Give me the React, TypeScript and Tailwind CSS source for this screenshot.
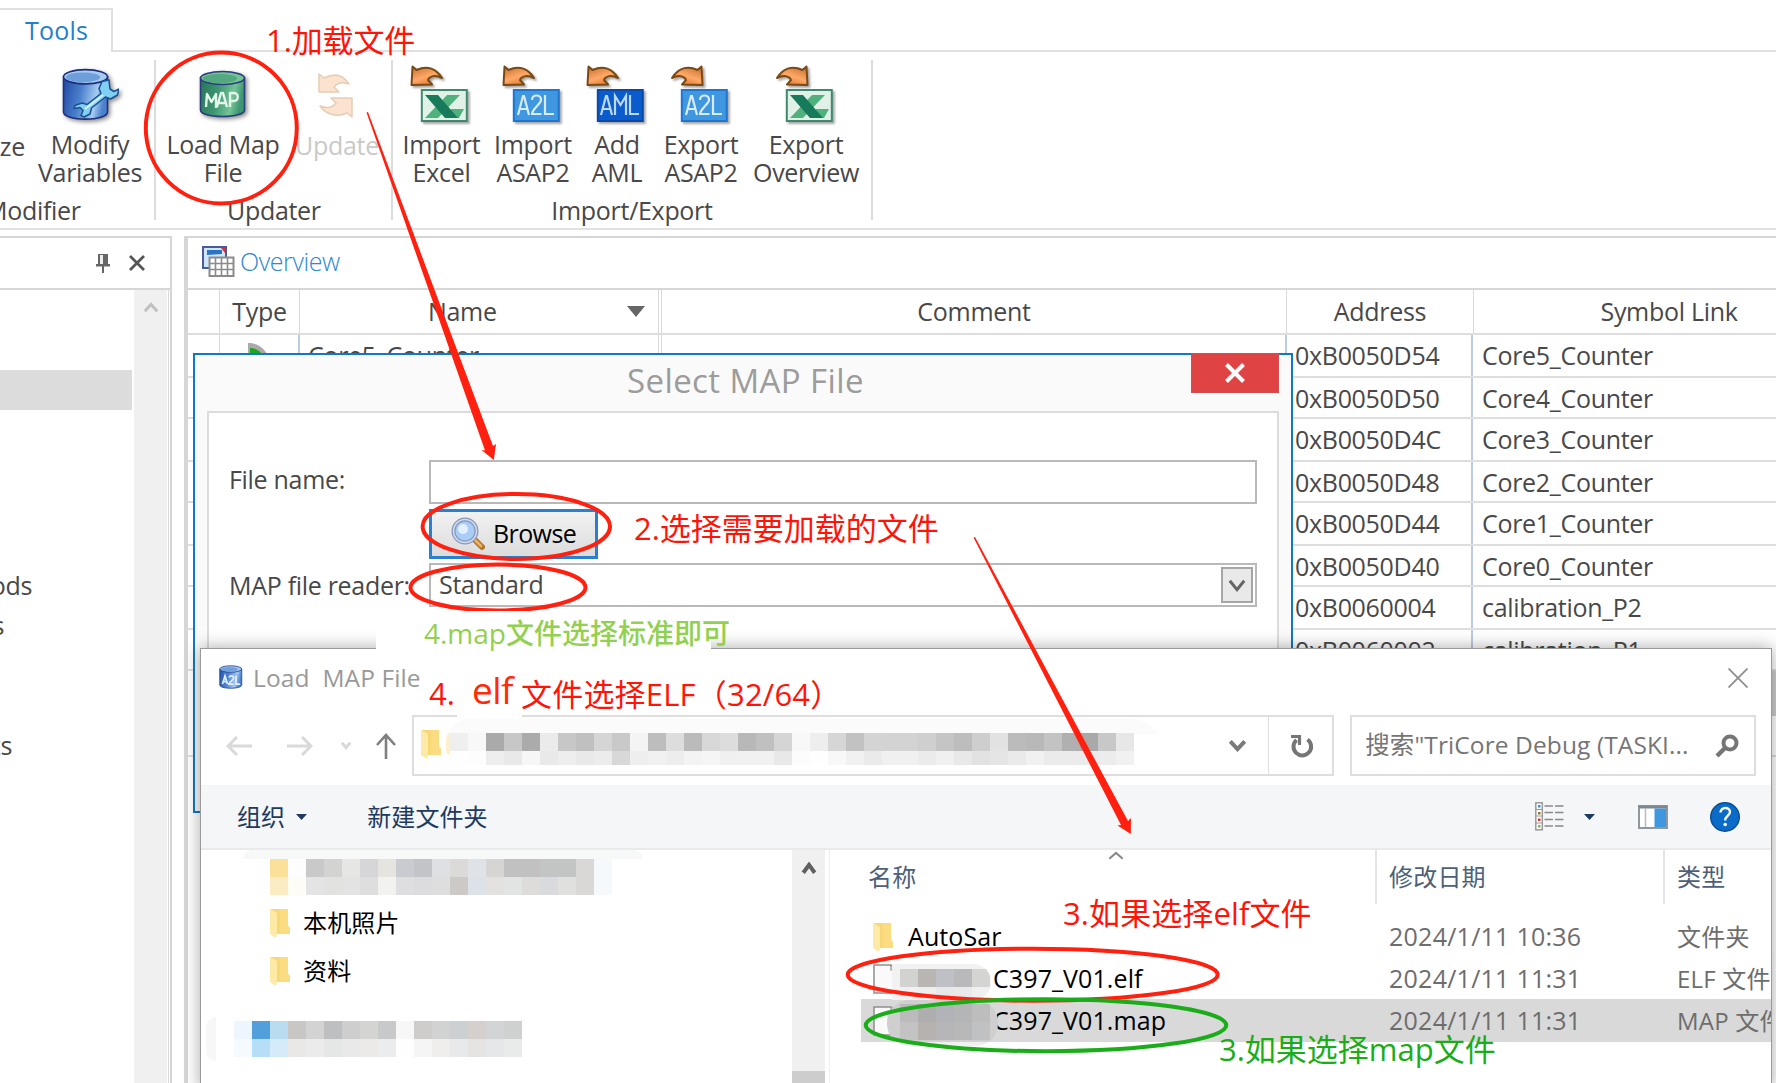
import React from "react";

const SANS = "font-['Open_Sans','Noto_Sans_CJK_SC',sans-serif]";

/* ---------- icons ---------- */

function Cylinder({ uid, dark, mid, light, stroke }: { uid: string; dark: string; mid: string; light: string; stroke: string }) {
  return (
    <g>
      <defs>
        <linearGradient id={uid} x1="0" x2="1" y1="0" y2="0.2">
          <stop offset="0" stopColor={dark} />
          <stop offset="0.45" stopColor={mid} />
          <stop offset="0.8" stopColor={light} />
          <stop offset="1" stopColor={mid} />
        </linearGradient>
      </defs>
      <path d="M1.5 8v32c0 4 10 6.500 22 6.500s22-2.500 22-6.500V8z" fill={`url(#${uid})`} stroke={stroke} strokeWidth="1.600" />
      <ellipse cx="23.500" cy="8" rx="22" ry="6.500" fill={light} stroke={stroke} strokeWidth="1.600" />
      <ellipse cx="21" cy="8.500" rx="17" ry="4.500" fill={mid} opacity="0.6" />
    </g>
  );
}

function ModifyIcon() {
  return (
    <svg width="58" height="56" viewBox="0 0 58 56" className="drop-shadow-[2px_2px_2px_rgba(0,0,0,0.45)]">
      <g transform="translate(1 1) scale(1 1.100)">
        <Cylinder uid="cylModify" dark="#2048a4" mid="#4a80cc" light="#a6ccf0" stroke="#1f2f80" />
      </g>
      <path
        d="M48 13l-7 1.500-3 7 2 5-14 11-5-1.500-7 2.500-1 3 6-1 3 3-2 5 3 1.500 6-3 1.500-6 14-11 5 2 7-4 1.500-6-5 2.500-4-2.500-.5-4z"
        fill="#7fd0f2"
        stroke="#1d4f94"
        strokeWidth="1.500"
        strokeLinejoin="round"
      />
      <path d="M24 42l18-14" stroke="#d8f3fd" strokeWidth="1.800" />
    </svg>
  );
}

function MapIcon() {
  return (
    <svg width="50" height="50" viewBox="0 0 50 50" className="ml-[2px] drop-shadow-[2px_2px_2px_rgba(0,0,0,0.45)]">
      <Cylinder uid="cylMap" dark="#277458" mid="#3d9672" light="#74c496" stroke="#2b3c80" />
      <path
        d="M7 37l1-13 4.500 8 4.500-8v14M18 37l4-14h2l4 14M19.500 33h7M31 37V23h4c5 0 5 8 0 8h-4"
        fill="none"
        stroke="#e4f6ec"
        strokeWidth="2.400"
        strokeLinejoin="round"
      />
    </svg>
  );
}

function UpdateIcon() {
  return (
    <svg width="38" height="48" viewBox="0 0 38 48" fill="#fbe3cf" stroke="#e6cdb4" strokeWidth="1.500" strokeLinejoin="round" className="-ml-[2px]">
      <path d="M2 2l5 4c10-5 19-3 25 6-8-3-12-1-15 3l5 5H2z" />
      <path d="M35 45l-5-4c-9 4-20 3-27-7 8 3 13 1 16-3l-5-5 21 0z" />
    </svg>
  );
}

function TransferIcon({ kind, out = false }: { kind: "XLS" | "A2L" | "AML"; out?: boolean }) {
  const gid = `arrow${kind}${out ? "Out" : "In"}`;
  return (
    <svg width="60" height="60" viewBox="0 0 60 60" className="-ml-[5px] drop-shadow-[2px_2px_1px_rgba(0,0,0,0.35)]">
      <defs>
        <linearGradient id={gid} x1="0" y1="0" x2="0.600" y2="1">
          <stop offset="0" stopColor="#c06a2a" />
          <stop offset="0.600" stopColor="#ffa868" />
          <stop offset="1" stopColor="#e07a2c" />
        </linearGradient>
      </defs>
      <g transform={out ? "translate(35 0) scale(-1 1)" : "translate(1 0)"}>
        <path
          d="M2.500 1.500l4 3.500c11-5 20-1 25.500 8-8-4-13-1-14 2l4 4.500-20.500.5z"
          fill={`url(#${gid})`}
          stroke="#7a4a14"
          strokeWidth="2"
          strokeLinejoin="round"
        />
      </g>
      {kind === "XLS" ? (
        <g>
          <rect x="12.800" y="25" width="45" height="31" fill="#e2f1e8" stroke="#3f8a6e" strokeWidth="2" />
          <path d="M38 30h13L29 53H16z" fill="#4fb27c" />
          <path d="M42 44h13l-5 9h-10z" fill="#4fb27c" />
          <path d="M16 30h13l20 23H36z" fill="#177a5a" />
        </g>
      ) : (
        <g>
          <rect
            x="12.800"
            y="25"
            width="45"
            height="31"
            fill={kind === "A2L" ? "#3f97e0" : "#0a5bcb"}
            stroke={kind === "A2L" ? "#1f76d0" : "#0b49a8"}
            strokeWidth="2"
          />
          {kind === "A2L" ? (
            <path d="M17 50l5-19h1l5 19M18.500 44h8M31 35c0-6 9-6 9 0 0 4-9 9-9 14h9.500M44 30v19h9" fill="none" stroke="#d9ecff" strokeWidth="2.200" />
          ) : (
            <path d="M16 50l5-19h1l5 19M17.500 44h8M30 50V31l5.500 9 5.500-9v19M45 30v19h9" fill="none" stroke="#bcd8fb" strokeWidth="2.200" />
          )}
        </g>
      )}
    </svg>
  );
}

function Folder() {
  return (
    <svg width="20" height="29" viewBox="0 0 20 29" className="shrink-0">
      <path d="M1 0h17v17l2 2v6H6z" fill="#f8d776" />
      <path d="M10 0h8v17l2 2v6H10z" fill="#fbdc80" />
      <path d="M0 0l7 4v21l-1 4-6-4z" fill="#ffe9a6" />
    </svg>
  );
}

function Doc() {
  return (
    <svg width="24" height="30" viewBox="0 0 24 30" className="shrink-0">
      <path d="M1 1h17l5 5v23H1z" fill="#fafafa" stroke="#8f8f8f" strokeWidth="1.500" />
      <path d="M18 1v5h5" fill="none" stroke="#8f8f8f" strokeWidth="1.200" />
    </svg>
  );
}

function Chevron({ className, w, h, sw, up = false }: { className: string; w: number; h: number; sw: number; up?: boolean }) {
  const o = sw / 2 + 0.3;
  const d = up ? `M${o} ${h - o}L${w / 2} ${o + 0.6}L${w - o} ${h - o}` : `M${o} ${o}L${w / 2} ${h - o - 0.6}L${w - o} ${o}`;
  return (
    <svg width={w} height={h} viewBox={`0 0 ${w} ${h}`} className={className}>
      <path d={d} fill="none" stroke="currentColor" strokeWidth={sw} />
    </svg>
  );
}

function Triangle({ className, w, h }: { className: string; w: number; h: number }) {
  return (
    <svg width={w} height={h} viewBox={`0 0 ${w} ${h}`} className={className}>
      <path d={`M0 0H${w}L${w / 2} ${h}z`} fill="currentColor" />
    </svg>
  );
}

/* Pixelated redaction: rows of 18px colour cells */
function Mosaic({ rows, rowClass = "h-[18px]" }: { rows: string[]; rowClass?: string }) {
  return (
    <div>
      {rows.map((row, i) => (
        <div key={i} className={`flex ${rowClass}`}>
          {row.split(" ").map((c, j) => (
            <div key={j} className="h-full w-[18px] shrink-0" style={{ backgroundColor: `#${c.length === 2 ? c + c + c : c}` }} />
          ))}
        </div>
      ))}
    </div>
  );
}

/* ---------- ribbon ---------- */

function RibbonItem({ width, icon, lines, muted = false }: { width: string; icon: React.ReactNode; lines: string[]; muted?: boolean }) {
  return (
    <div className={`flex shrink-0 flex-col items-center ${width}`}>
      <div className="flex h-[70px] items-center justify-center">{icon}</div>
      {lines.map((l) => (
        <div key={l} className={`h-7 whitespace-nowrap leading-7 ${muted ? "text-[#c9c9c9]" : ""}`}>
          {l}
        </div>
      ))}
    </div>
  );
}

function RibbonGroup({ width, label, labelClass, children }: { width: string; label: string; labelClass: string; children: React.ReactNode }) {
  return (
    <div className={`flex h-[160px] shrink-0 flex-col border-r-2 border-[#dcdcdc] ${width}`}>
      <div className="flex h-[136px]">{children}</div>
      <div className={`h-6 whitespace-nowrap leading-7 ${labelClass}`}>{label}</div>
    </div>
  );
}

function Ribbon() {
  return (
    <div className="h-[230px] shrink-0 border-b-2 border-[#e2e2e2]">
      <div className="flex h-[52px] items-end">
        <div className="h-11 w-[113px] shrink-0 border-r-2 border-t-2 border-[#e0e0e0] pl-[25px] text-[25px] leading-[40px] tracking-[0.2px] text-[#2380cc]">
          Tools
        </div>
        <div className="h-0 flex-1 border-b-2 border-[#e0e0e0]" />
      </div>
      <div className="flex pt-2">
        <RibbonGroup width="w-[156px]" label="Modifier" labelClass="-ml-[15px]">
          <div className="flex w-[25px] flex-col items-end pt-[72px]">
            <div className="leading-7">ze</div>
          </div>
          <RibbonItem width="w-[130px]" icon={<ModifyIcon />} lines={["Modify", "Variables"]} />
        </RibbonGroup>
        <RibbonGroup width="w-[237px]" label="Updater" labelClass="pl-[71px]">
          <RibbonItem width="w-[134px]" icon={<MapIcon />} lines={["Load Map", "File"]} />
          <RibbonItem width="w-[94px] pt-px" icon={<UpdateIcon />} lines={["Update"]} muted />
        </RibbonGroup>
        <RibbonGroup width="w-[480px]" label="Import/Export" labelClass="text-center">
          <div className="flex pl-[3px]">
            <RibbonItem width="w-[91px]" icon={<TransferIcon kind="XLS" />} lines={["Import", "Excel"]} />
            <RibbonItem width="w-[92px]" icon={<TransferIcon kind="A2L" />} lines={["Import", "ASAP2"]} />
            <RibbonItem width="w-[76px]" icon={<TransferIcon kind="AML" />} lines={["Add", "AML"]} />
            <RibbonItem width="w-[92px]" icon={<TransferIcon kind="A2L" out />} lines={["Export", "ASAP2"]} />
            <RibbonItem width="w-[118px]" icon={<TransferIcon kind="XLS" out />} lines={["Export", "Overview"]} />
          </div>
        </RibbonGroup>
      </div>
    </div>
  );
}

/* ---------- main panels ---------- */

function SidePanel() {
  return (
    <div className="flex w-[172px] shrink-0 flex-col border-r-2 border-t-2 border-[#d6d6d6]">
      <div className="flex h-[52px] items-center justify-end gap-[19px] border-b-2 border-[#d6d6d6] pr-[25px]">
        <svg width="14" height="20" viewBox="0 0 14 20">
          <path d="M2 1h10v11H2z" fill="#666" />
          <path d="M4 2h3v9H4z" fill="#eee" />
          <path d="M0 11h14v2.500H0zM6 13h2v7H6z" fill="#666" />
        </svg>
        <svg width="16" height="16" viewBox="0 0 16 16">
          <path d="M1 1l14 14M15 1L1 15" stroke="#555" strokeWidth="2.800" />
        </svg>
      </div>
      <div className="flex flex-1">
        <div className="w-[134px] overflow-hidden pt-[80px]">
          <div className="h-10 w-[132px] bg-[#dcdcdc]" />
          <div className="flex w-8 justify-end pt-[161px] leading-7">ods</div>
          <div className="flex w-1 justify-end pt-[12px] leading-7">s</div>
          <div className="flex w-3 justify-end pt-[92px] leading-7">ts</div>
        </div>
        <div className="flex w-[33px] justify-center bg-[#f0f0f0] pt-[12px]">
          <Chevron className="text-[#c0c0c0]" w={16} h={11} sw={3} up />
        </div>
        <div className="w-[2px] border-r border-[#d9d9d9]" />
      </div>
    </div>
  );
}

const ROWS: [string, string, string][] = [
  ["h-[43px]", "0xB0050D54", "Core5_Counter"],
  ["h-[41px]", "0xB0050D50", "Core4_Counter"],
  ["h-[43px]", "0xB0050D4C", "Core3_Counter"],
  ["h-[41px]", "0xB0050D48", "Core2_Counter"],
  ["h-[43px]", "0xB0050D44", "Core1_Counter"],
  ["h-[41px]", "0xB0050D40", "Core0_Counter"],
  ["h-[43px]", "0xB0060004", "calibration_P2"],
  ["h-[41px]", "0xB0060002", "calibration_P1"],
];

function OverviewPanel() {
  return (
    <div className="flex flex-1 flex-col overflow-hidden border-l-4 border-t-2 border-[#d6d6d6]">
      <div className="flex h-[52px] shrink-0 items-center border-b-2 border-[#d6d6d6] pl-[14px]">
        <svg width="33" height="32" viewBox="0 0 33 32" className="-mt-[3px]">
          <rect x="1" y="1" width="23" height="21" fill="#cfe6fa" stroke="#4b5a9c" strokeWidth="2" />
          <path d="M5 4h15v4l-15 1z" fill="#2a74c4" />
          <path d="M19 2h4v5z" fill="#d33" />
          <rect x="7.500" y="11.500" width="24" height="18.500" fill="#fff" stroke="#8b8b8b" strokeWidth="2" />
          <path d="M13.500 11v19M19.500 11v19M25.500 11v19M7 17.500h25M7 23.500h25" stroke="#8b8b8b" strokeWidth="1.600" />
        </svg>
        <span className="-mt-[2px] ml-[5px] font-light tracking-[-0.4px] text-[#2f88d2]">Overview</span>
      </div>
      <div className="flex h-[45px] shrink-0 border-b-2 border-[#dedede] text-center leading-[43px]">
        <div className="w-8 shrink-0 border-r border-[#d9d9d9]" />
        <div className="w-[80px] shrink-0 border-r border-[#d9d9d9]">Type</div>
        <div className="flex w-[362px] shrink-0 items-center border-r-4 border-double border-[#d9d9d9]">
          <span className="ml-[128px]">Name</span>
          <Triangle className="ml-auto mr-[13px] text-[#666]" w={18} h={11} />
        </div>
        <div className="w-[625px] shrink-0 border-r border-[#d9d9d9]">Comment</div>
        <div className="w-[187px] shrink-0 border-r border-[#d9d9d9]">Address</div>
        <div className="w-[390px] shrink-0">Symbol Link</div>
      </div>
      {ROWS.map(([h, addr, name], i) => (
        <div key={addr} className={`flex shrink-0 border-b-2 border-[#dedede] ${h} leading-[40px]`}>
          <div className="w-8 border-r border-[#d9d9d9]" />
          <div className="flex w-[80px] justify-center border-r-2 border-[#bccbe0] pt-[7px]">
            {i === 0 && (
              <svg width="24" height="24" viewBox="0 0 24 24">
                <path d="M1 1c12 0 21 8 22 22H1z" fill="#aaa" />
                <path d="M3 6c7 0 13 5 15 12H3z" fill="#1ea51e" />
              </svg>
            )}
          </div>
          <div className="w-[362px] border-r-4 border-double border-[#d9d9d9] pl-[8px]">{name}</div>
          <div className="w-[625px] border-r-2 border-[#bccbe0]" />
          <div className="w-[186px] border-r-2 border-[#bccbe0] pl-[8px]">{addr}</div>
          <div className="pl-[9px]">{name}</div>
        </div>
      ))}
      <div className="flex h-[45px] shrink-0 justify-end">
        <div className="w-[12px] bg-[#cdcdcd]" />
      </div>
      <div className="flex h-[41px] shrink-0 border-b-2 border-[#dedede]" />
    </div>
  );
}

/* ---------- Select MAP File dialog ---------- */

function SelectMapDialog() {
  return (
    <div className="absolute left-[193px] top-[353px] flex h-[460px] w-[1100px] flex-col border-2 border-[#0f78c8] bg-[#fafafa]">
      <div className="flex h-[56px] shrink-0">
        <div className="w-[996px] pl-[432px] text-[33px] leading-[52px] tracking-[0.4px] text-[#9c9c9c]">Select MAP File</div>
        <div className="-mt-[2px] flex h-[40px] w-[88px] items-center justify-center border border-[#cf5050] bg-[#e04343]">
          <svg width="20" height="20" viewBox="0 0 20 20">
            <path d="M1.500 1.500l17 17M18.500 1.500l-17 17" stroke="#fff" strokeWidth="4" />
          </svg>
        </div>
      </div>
      <div className="ml-[12px] mr-[12px] flex flex-1 flex-col border-2 border-b-0 border-[#dcdcdc] bg-white pl-[20px] pt-[47px]">
        <div className="flex">
          <div className="w-[200px] leading-[38px]">File name:</div>
          <div className="h-[44px] w-[828px] border-2 border-[#b9b9b9] bg-white" />
        </div>
        <div className="ml-[200px] mt-[5px] flex h-[50px] w-[169px] items-center border-[3px] border-[#2a80cc] bg-gradient-to-b from-[#f2f2f2] to-[#dcdcdc] pl-[19px]">
          <svg width="34" height="34" viewBox="0 0 34 34">
            <path d="M22 21l9 9" stroke="#b5762c" strokeWidth="6" strokeLinecap="round" />
            <path d="M22 21l8 8" stroke="#e9b36c" strokeWidth="2.500" strokeLinecap="round" />
            <circle cx="14" cy="14" r="11.500" fill="#a9cdf8" stroke="#8798bd" strokeWidth="4" />
            <circle cx="14" cy="14" r="11.500" fill="none" stroke="#d3dcec" strokeWidth="1.500" />
            <circle cx="12" cy="12" r="5" fill="#e3f1ff" />
          </svg>
          <span className="ml-[8px] tracking-[-0.6px] text-black">Browse</span>
        </div>
        <div className="mt-[4px] flex">
          <div className="w-[200px] whitespace-nowrap leading-[45px]">MAP file reader:</div>
          <div className="flex h-[44px] w-[828px] items-center justify-between border-2 border-[#b9b9b9] bg-white pl-[8px] pr-[2px]">
            <span className="tracking-[-0.25px]">Standard</span>
            <div className="flex h-[36px] w-[32px] items-center justify-center border-2 border-[#a6a6a6] bg-[#e9e9e9]">
              <Chevron className="text-[#666]" w={18} h={13} sw={3} />
            </div>
          </div>
        </div>
      </div>
    </div>
  );
}

/* ---------- Load MAP File dialog ---------- */

const ADDRESS_TOP =
  "ef f8 aa c7 ab eb c7 c0 d5 c9 f4 bd dd bb d8 dd b8 c0 d5 f8 ee d6 c2 d4 d3 d3 cf c5 bd ce e2 bb b8 c3 b0 a9 c8 e7";
const ADDRESS_BOTTOM =
  "fe fd ee e9 f6 e9 ee e9 ec d8 ee f1 ed f3 f5 f0 f1 f1 e8 fc fe f8 f1 ea f0 f0 eb f0 e8 e2 e5 ea f1 eb eb eb ec f1";

function AddressRow() {
  return (
    <div className="flex h-[61px] shrink-0 pr-[15px]">
      <div className="flex w-[211px] items-center pl-[25px]">
        <svg width="26" height="20" viewBox="0 0 26 20" className="text-[#d9d9d9]">
          <path d="M26 10H2M11 1L2 10l9 9" fill="none" stroke="currentColor" strokeWidth="3" />
        </svg>
        <svg width="26" height="20" viewBox="0 0 26 20" className="ml-[35px] text-[#d9d9d9]">
          <path d="M0 10h24M15 1l9 9-9 9" fill="none" stroke="currentColor" strokeWidth="3" />
        </svg>
        <Chevron className="ml-[27px] text-[#d9d9d9]" w={12} h={9} sw={3} />
        <svg width="20" height="26" viewBox="0 0 20 26" className="ml-[24px] text-[#7f7f7f]">
          <path d="M10 26V2M1 12l9-10 9 10" fill="none" stroke="currentColor" strokeWidth="2.600" />
        </svg>
      </div>
      <div className="flex w-[923px] border-2 border-[#dedede]">
        <div className="flex w-[855px] border-r border-[#dedede] pl-[7px]">
          <div className="pt-[13px]">
            <Folder />
          </div>
          <div className="ml-[5px] mt-[2px] h-[48px] w-[714px] overflow-hidden rounded-tl-[22px] rounded-tr-[28px] bg-gradient-to-b from-[#fbfbfb] from-[32%] to-white to-[33%]">
            <div className="flex">
              <div className="mt-[14px] h-[22px] w-1 shrink-0 rounded-l-full bg-[#fdf0cb]" />
              <div className="pt-[14px]">
                <Mosaic rows={[ADDRESS_TOP]} />
                <Mosaic rows={[ADDRESS_BOTTOM]} rowClass="h-[14px]" />
              </div>
            </div>
          </div>
          <div className="ml-auto flex items-center pr-[21px]">
            <Chevron className="text-[#7a7a7a]" w={19} h={13} sw={4} />
          </div>
        </div>
        <div className="flex flex-1 items-center justify-center pl-[3px]">
          <svg width="24" height="24" viewBox="0 0 24 24" className="text-[#757575]">
            <path d="M6.500 6a8.800 8.800 0 1 0 11-.5" fill="none" stroke="currentColor" strokeWidth="4" />
            <path d="M1 2.500h8.500V11" fill="none" stroke="currentColor" strokeWidth="3.200" />
          </svg>
        </div>
      </div>
      <div className="ml-[16px] flex w-[406px] items-center border-2 border-[#dedede] pl-[13px] text-[24.500px] tracking-[0.1px] text-[#757575]">
        <span className="whitespace-nowrap">搜索"TriCore Debug (TASKI...</span>
        <svg width="24" height="24" viewBox="0 0 24 24" className="ml-auto mr-[15px] shrink-0 text-[#757575]">
          <circle cx="15" cy="9" r="6.500" fill="none" stroke="currentColor" strokeWidth="4" />
          <path d="M10.500 13.500L2 22" stroke="currentColor" strokeWidth="4.500" />
        </svg>
      </div>
    </div>
  );
}

function Toolbar() {
  return (
    <div className="mt-[9px] flex h-[65px] shrink-0 items-center border-b-2 border-[#e8eaec] bg-[#f4f6f8] pl-[36px] text-[24px] tracking-[0.1px] text-[#1e3a5f]">
      <span>组织</span>
      <Triangle className="ml-[11px] text-[#1e3a5f]" w={11} h={6} />
      <span className="ml-[60px]">新建文件夹</span>
      <div className="ml-auto flex items-center pr-[31px]">
        <svg width="29" height="29" viewBox="0 0 29 29">
          <rect x="0.800" y="0.800" width="6.500" height="27" fill="#fff" stroke="#9a9a9a" strokeWidth="1.500" />
          <path d="M1 7.500h6M1 14h6M1 21h6" stroke="#9a9a9a" />
          <path d="M9.500 4h8.500M20 4h8.500M9.500 10.500h8.500M20 10.500h8.500M9.500 17.500h8.500M20 17.500h8.500M9.500 24h8.500M20 24h8.500" stroke="#8a8a8a" strokeWidth="1.600" />
          <path d="M3 3h2.500v2.500H3z" fill="#3b8fd8" />
          <path d="M3 10h2.500v2.500H3z" fill="#8a7a3a" />
          <path d="M3 16.500h2.500V19H3z" fill="#c43a2a" />
          <path d="M3 23h2.500v2.500H3z" fill="#7ab46a" />
        </svg>
        <Triangle className="ml-[20px] text-[#1e3a5f]" w={11} h={6} />
        <svg width="30" height="24" viewBox="0 0 30 24" className="ml-[43px]">
          <rect x="1" y="1" width="28" height="22" fill="#fff" stroke="#8f979f" strokeWidth="2" />
          <path d="M1 0.500h28v3H1z" fill="#7d858d" />
          <path d="M7.500 3v19" stroke="#bbb" strokeWidth="1.500" />
          <path d="M16.500 3.500H28V22H16.500z" fill="#3f97e0" />
        </svg>
        <svg width="30" height="30" viewBox="0 0 30 30" className="ml-[42px]">
          <circle cx="15" cy="15" r="14.300" fill="#0a6bc8" stroke="#0a4d94" strokeWidth="1.400" />
          <path d="M10.500 10.500c0-6 9.500-6 9.500-.5 0 3.500-4.800 4-4.800 8.500" fill="none" stroke="#fff" strokeWidth="2.400" />
          <circle cx="15.200" cy="22.500" r="1.800" fill="#fff" />
        </svg>
      </div>
    </div>
  );
}

function TreePane() {
  return (
    <div className="flex w-[591px] shrink-0 flex-col text-[24px] tracking-[0.15px] text-black">
      <div className="ml-[42px] h-[9px] w-[400px] rounded-t-[20px] bg-[#f7f9f9]" />
      <div className="ml-[69px]">
        <Mosaic
          rows={[
            "fae099 fdfdfd c9c9c9 d3d3d1 e6e6e4 d6d6d8 e5e4e0 cacbd1 c2c4c8 dfe0e4 dcdad9 dfe2e6 d6d5d4 c1c1c1 c1c1c1 c3c5c4 c3c5c4 d9d8d7 f6f9fc",
            "fbecc3 fdfdf6 e4e4e4 e2e2e0 e3e3e3 dedede f2f2f0 dedee0 dcdcde dedede cdc9c6 dce2e7 e4e2e1 e2e4e3 dddcdb d8dadd e0e0df d9d8d6 f6f9fc",
          ]}
        />
      </div>
      <div className="ml-[69px] mt-[4px] flex h-[48px] items-center">
        <Folder />
        <span className="ml-[13px]">本机照片</span>
      </div>
      <div className="ml-[69px] flex h-[48px] items-center">
        <Folder />
        <span className="ml-[13px]">资料</span>
      </div>
      <div className="ml-[5px] mt-[22px] flex">
        <div className="mr-[18px] h-[44px] w-[10px] rounded-l-[20px] bg-[#f7f7f7]" />
        <div className="pt-[4px]">
          <Mosaic
            rows={[
              "edf5fd 539fdb b9dcf0 c9c7c6 d3d3d4 bebfc1 cecece d4d4d2 c8c9cb f7f7f7 cecdcb d1d3d2 cdd0d3 d5d0ce d3d4d6 cfd1d1",
              "f5fafe b6dff7 d6ebfa e9e8e6 ebebec e5e6e6 e9e9e9 ebeae8 ebecee fefefe f5f5f5 efeeec e7e9eb e6e4e2 e6e7e8 e9eaea",
            ]}
          />
        </div>
      </div>
    </div>
  );
}

function FileRow({
  icon,
  name,
  date,
  type,
  selected = false,
  mask,
}: {
  icon: React.ReactNode;
  name: string;
  date: string;
  type: string;
  selected?: boolean;
  mask?: React.ReactNode;
}) {
  return (
    <div className={`flex items-center ${selected ? "-mt-px h-[43px] bg-[#d9d9d9]" : "h-[42px]"}`}>
      <div className="relative flex h-full w-[528px] shrink-0 items-center pl-[12px] tracking-[0.1px] text-black">
        {icon}
        <span className={mask ? "ml-[96px]" : "ml-[15px]"}>{name}</span>
        {mask}
      </div>
      <div className="w-[288px] shrink-0 tracking-[0.25px] text-[#6d6d6d]">{date}</div>
      <div className="shrink-0 whitespace-nowrap text-[24px] tracking-[0.2px] text-[#6d6d6d]">{type}</div>
    </div>
  );
}

function FileList() {
  return (
    <div className="min-w-0 flex-1 overflow-hidden">
      <div className="ml-[31px] flex h-[54px] text-[24px] tracking-[0.2px] text-[#4c607a]">
        <div className="relative flex w-[516px] shrink-0 items-center border-r-2 border-[#e5e5e5] pl-[7px]">
          名称
          <Chevron className="absolute left-[247px] top-[1px] text-[#8a8a8a]" w={16} h={9} sw={2} up />
        </div>
        <div className="flex w-[288px] shrink-0 items-center border-r-2 border-[#e5e5e5] pl-[12px]">修改日期</div>
        <div className="flex shrink-0 items-center whitespace-nowrap pl-[12px]">类型</div>
      </div>
      <div className="ml-[31px] pt-[12px]">
        <FileRow icon={<Folder />} name="AutoSar" date="2024/1/11 10:36" type="文件夹" />
        <FileRow
          icon={<Doc />}
          name="C397_V01.elf"
          date="2024/1/11 11:31"
          type="ELF 文件"
          mask={
            <div className="absolute left-[31px] top-[6px] h-[36px] w-[99px] overflow-hidden rounded-r-[20px] bg-[#f2f2f3] pl-[8px] pt-[5px]">
              <Mosaic rows={["d2d2d0 b8b5b2 bfbfc6 b9b9bb d4d4d2", "f0f1f2 eeeeef e5e7e8 e9e9ea f0f0f0"]} />
            </div>
          }
        />
        <FileRow
          selected
          icon={<Doc />}
          name="C397_V01.map"
          date="2024/1/11 11:31"
          type="MAP 文件"
          mask={
            <div className="absolute left-[26px] top-[1px] h-[46px] w-[111px] overflow-hidden rounded-[22px] bg-gradient-to-b from-[#cfcfcf] from-[90%] to-[#f0f0f0] to-[92%] pl-[13px] pt-[4px]">
              <Mosaic rows={["bbbbbb aeaeae b2b3b8 b4b5b7 bdbdbd", "c3c3c3 b5b2af b6b6b8 b8b8b9 bfc1c2"]} />
            </div>
          }
        />
      </div>
    </div>
  );
}

function LoadMapDialog() {
  return (
    <div className="absolute left-[200px] top-[648px] flex h-[441px] w-[1572px] flex-col border border-[#9a9a9a] bg-white shadow-[0_0_16px_rgba(0,0,0,0.35)]">
      <div className="flex h-[66px] shrink-0 items-start pl-[18px] pr-[23px] pt-[16px]">
        <svg width="24" height="25" viewBox="0 0 48 50">
          <Cylinder uid="cylLoad" dark="#2450a8" mid="#4f83cf" light="#a6c8ee" stroke="#1f3f90" />
          <path d="M7 38l5-16 5 16M9 33h6M20 25c2-5 10-4 9 2-1 4-8 6-9 11h9M34 22v16h8" fill="none" stroke="#dfeeff" strokeWidth="3.500" />
        </svg>
        <span className="ml-[10px] mt-[-2px] whitespace-pre text-[24.500px] leading-[30px] tracking-[0.1px] text-[#999]">{"Load  MAP File"}</span>
        <svg width="20" height="20" viewBox="0 0 20 20" className="ml-auto mt-[3px]">
          <path d="M0.500 0.500l19 19M19.500 0.500l-19 19" stroke="#8f8f8f" strokeWidth="1.800" />
        </svg>
      </div>
      <AddressRow />
      <Toolbar />
      <div className="flex min-h-0 flex-1">
        <TreePane />
        <div className="flex w-[33px] shrink-0 flex-col items-center justify-between bg-[#f0f0f0] pb-[5px] pt-[12px]">
          <Chevron className="text-[#5f5f5f]" w={16} h={13} sw={4} up />
          <div className="h-[12px] w-full bg-[#cdcdcd]" />
        </div>
        <div className="ml-[2px] w-[3px] shrink-0 border-r border-[#eee]" />
        <FileList />
      </div>
    </div>
  );
}

/* ---------- tutorial annotations ---------- */

function Annotations() {
  return (
    <>
      <div className="absolute left-[376px] top-[612px] h-[50px] w-[335px] bg-white" />
      <div className="absolute left-[457px] top-[690px] h-[28px] w-[65px] bg-white" />
      <svg className="absolute left-0 top-0" width="1776" height="1083" viewBox="0 0 1776 1083" fill="none" strokeWidth="4">
        <defs>
          <clipPath id="aboveNote">
            <rect x="400" y="550" width="200" height="61" />
          </clipPath>
        </defs>
        <circle cx="221.300" cy="128" r="75.500" stroke="#ff2010" />
        <ellipse cx="516.300" cy="526.500" rx="93.700" ry="32.500" stroke="#ff2010" />
        <ellipse cx="498" cy="587.500" rx="87.500" ry="23" stroke="#ff2010" clipPath="url(#aboveNote)" />
        <ellipse cx="1032.700" cy="974.700" rx="185" ry="26" stroke="#ff2010" />
        <ellipse cx="1046" cy="1025.200" rx="180.300" ry="26" stroke="#1aad19" />
        <path d="M366.500 112.500L368 112L493 446L496 444L493.800 460L481.500 450L485 450.500z" fill="#ff2010" />
        <path d="M973.500 537.500L975 537L1128 821L1131 818L1130.800 834L1117.500 825.500L1121 825z" fill="#ff2010" />
      </svg>
      <div className="absolute left-[266px] top-[19px] whitespace-nowrap text-[31px] leading-[42px] tracking-[-0.1px] text-[#ff1408]">1.加载文件</div>
      <div className="absolute left-[634px] top-[507px] whitespace-nowrap text-[31px] leading-[42px] tracking-normal text-[#ff1408]">2.选择需要加载的文件</div>
      <div className="absolute left-[1063px] top-[892px] whitespace-nowrap text-[31px] leading-[42px] tracking-[0.1px] text-[#ff1408]">3.如果选择elf文件</div>
      <div className="absolute left-[1219px] top-[1028px] whitespace-nowrap text-[31px] leading-[42px] tracking-normal text-[#1aad19]">3.如果选择map文件</div>
      <div className="absolute left-[424px] top-[612px] whitespace-nowrap text-[28px] font-medium leading-[42px] tracking-normal text-[#92d050]">4.map文件选择标准即可</div>
      <div className="absolute left-[429px] top-[672px] whitespace-nowrap text-[31px] leading-[42px] tracking-normal text-[#ff1408]">4.</div>
      <div className="absolute left-[472px] top-[669px] whitespace-nowrap text-[37px] font-medium leading-[42px] tracking-[-0.5px] text-[#ff2a08]">elf</div>
      <div className="absolute left-[521px] top-[673px] whitespace-nowrap text-[31px] leading-[42px] tracking-[0.2px] text-[#ff1408]">文件选择ELF（32/64）</div>
    </>
  );
}

export default function App() {
  return (
    <div className={`relative flex h-[1083px] w-[1776px] flex-col overflow-hidden bg-white text-[25px] tracking-[-0.3px] text-[#484848] ${SANS}`}>
      <Ribbon />
      <div className="mt-[6px] flex min-h-0 flex-1 gap-3">
        <SidePanel />
        <OverviewPanel />
      </div>
      <SelectMapDialog />
      <LoadMapDialog />
      <Annotations />
    </div>
  );
}
